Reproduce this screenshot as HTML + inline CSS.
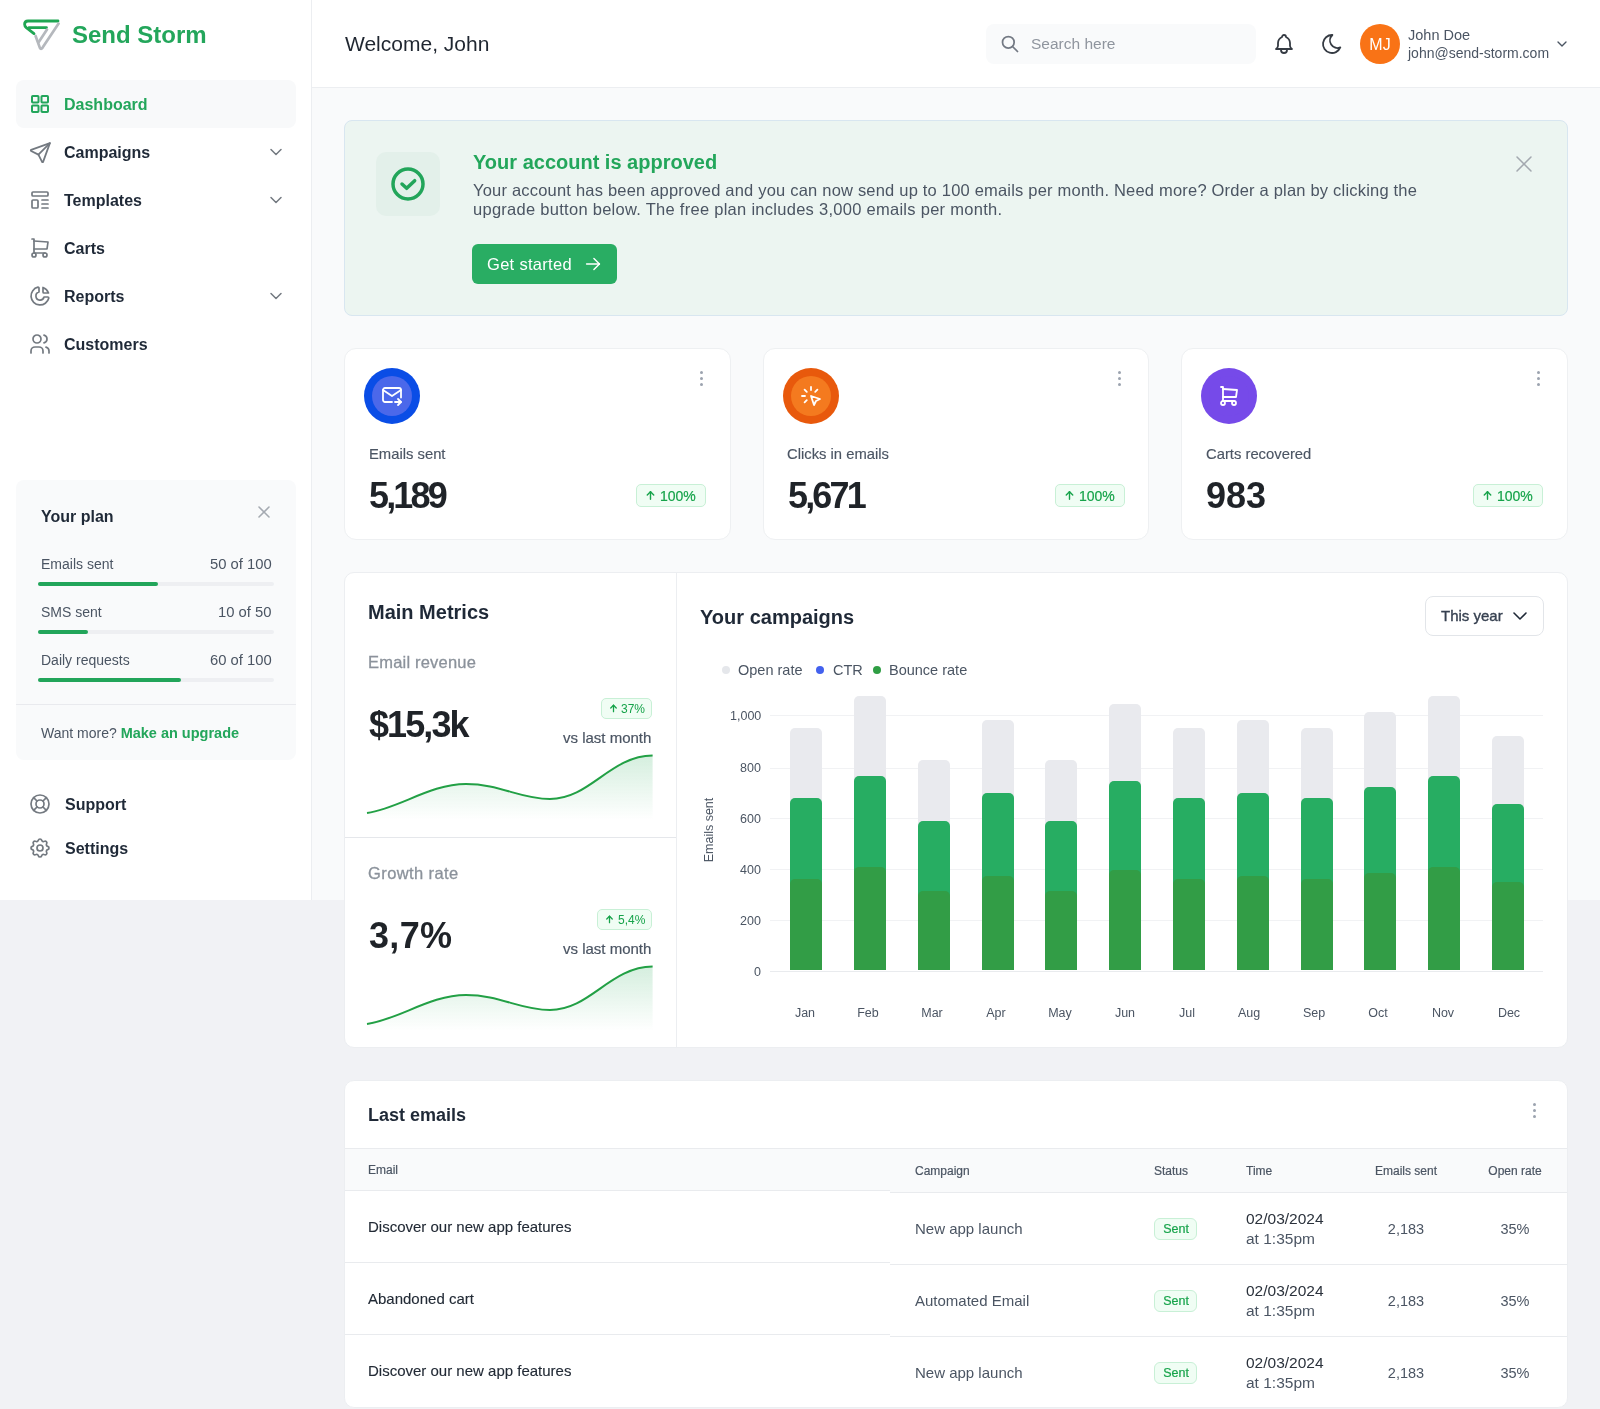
<!DOCTYPE html>
<html><head><meta charset="utf-8"><title>Send Storm Dashboard</title>
<style>
html,body{margin:0;padding:0;}
body{width:1600px;height:1409px;position:relative;overflow:hidden;background:#f1f2f5;font-family:"Liberation Sans",sans-serif;}
.a{position:absolute;}
.t{position:absolute;white-space:nowrap;will-change:transform;}
</style></head><body>
<div class="a" style="left:0px;top:0px;width:311px;height:900px;background:#ffffff;"></div>
<div class="a" style="left:311px;top:0px;width:1px;height:900px;background:#eceef1;"></div>
<div class="a" style="left:312px;top:0px;width:1288px;height:87px;background:#ffffff;"></div>
<div class="a" style="left:312px;top:87px;width:1288px;height:1px;background:#eceef1;"></div>
<div class="a" style="left:312px;top:88px;width:1288px;height:812px;background:#f9fafb;"></div>
<svg class="a" style="left:0px;top:0px;" width="70" height="60" viewBox="0 0 70 60" fill="none" stroke="none" stroke-width="0" stroke-linecap="round" stroke-linejoin="round"><path d="M58 21 L28 21 Q24.6 21 24.6 24.3 Q24.6 26.2 26.3 27.6 L34 33.6" stroke="#1fa652" stroke-width="2.8"/><path d="M29 27.6 L46.5 27.6" stroke="#1fa652" stroke-width="2.6"/><path d="M35.6 36 L39.8 47.6 Q40.9 50 42.6 47.6 L58.6 23.6" stroke="#b5b8bd" stroke-width="2.7"/><path d="M47 29.6 L38.6 42.2" stroke="#b5b8bd" stroke-width="2.7"/></svg>
<div class="t" style="top:23px;font-size:24px;line-height:24px;color:#23a65b;font-weight:700;left:72.00px;">Send Storm</div>
<div class="a" style="left:16px;top:80px;width:280px;height:48px;background:#f8f9fa;border-radius:8px;"></div>
<svg class="a" style="left:31px;top:95px;" width="18" height="18" viewBox="0 0 18 18" fill="none" stroke="#23a65b" stroke-width="2" stroke-linecap="round" stroke-linejoin="round"><rect x="1" y="1" width="6.5" height="6.5" rx="0.8"/><rect x="10.5" y="1" width="6.5" height="6.5" rx="0.8"/><rect x="1" y="10.5" width="6.5" height="6.5" rx="0.8"/><rect x="10.5" y="10.5" width="6.5" height="6.5" rx="0.8"/></svg>
<div class="t" style="top:97px;font-size:16px;line-height:16px;color:#23a65b;font-weight:700;left:64.00px;">Dashboard</div>
<svg class="a" style="left:27.5px;top:139.5px;" width="25" height="25" viewBox="0 0 24 24" fill="none" stroke="#737980" stroke-width="1.7" stroke-linecap="round" stroke-linejoin="round"><path d="M10 14l11 -11"/><path d="M21 3l-6.5 18a.55 .55 0 0 1 -1 0l-3.5 -7l-7 -3.5a.55 .55 0 0 1 0 -1l18 -6.5"/></svg>
<div class="t" style="top:145px;font-size:16px;line-height:16px;color:#1f2937;font-weight:700;left:64.00px;">Campaigns</div>
<svg class="a" style="left:266px;top:142px;" width="20" height="20" viewBox="0 0 24 24" fill="none" stroke="#737980" stroke-width="1.8" stroke-linecap="round" stroke-linejoin="round"><path d="M6 9l6 6l6 -6"/></svg>
<svg class="a" style="left:28px;top:188px;" width="24" height="24" viewBox="0 0 24 24" fill="none" stroke="#737980" stroke-width="1.7" stroke-linecap="round" stroke-linejoin="round"><rect x="4" y="4" width="16" height="4" rx="1"/><rect x="4" y="12" width="6" height="8" rx="1"/><path d="M14 12l6 0"/><path d="M14 16l6 0"/><path d="M14 20l6 0"/></svg>
<div class="t" style="top:193px;font-size:16px;line-height:16px;color:#1f2937;font-weight:700;left:64.00px;">Templates</div>
<svg class="a" style="left:266px;top:190px;" width="20" height="20" viewBox="0 0 24 24" fill="none" stroke="#737980" stroke-width="1.8" stroke-linecap="round" stroke-linejoin="round"><path d="M6 9l6 6l6 -6"/></svg>
<svg class="a" style="left:28px;top:236px;" width="24" height="24" viewBox="0 0 24 24" fill="none" stroke="#737980" stroke-width="1.7" stroke-linecap="round" stroke-linejoin="round"><path d="M6 19m-2 0a2 2 0 1 0 4 0a2 2 0 1 0 -4 0"/><path d="M17 19m-2 0a2 2 0 1 0 4 0a2 2 0 1 0 -4 0"/><path d="M17 17h-11v-14h-2"/><path d="M6 5l14 1l-1 7h-13"/></svg>
<div class="t" style="top:241px;font-size:16px;line-height:16px;color:#1f2937;font-weight:700;left:64.00px;">Carts</div>
<svg class="a" style="left:28px;top:284px;" width="24" height="24" viewBox="0 0 24 24" fill="none" stroke="#737980" stroke-width="1.7" stroke-linecap="round" stroke-linejoin="round"><path d="M10 3.2a9 9 0 1 0 10.8 10.8a1 1 0 0 0 -1 -1h-3.8a4.1 4.1 0 1 1 -5 -5v-4a.9 .9 0 0 0 -1 -.8"/><path d="M15 3.5a9 9 0 0 1 5.5 5.5h-4.5a1 1 0 0 1 -1 -1v-4.5"/></svg>
<div class="t" style="top:289px;font-size:16px;line-height:16px;color:#1f2937;font-weight:700;left:64.00px;">Reports</div>
<svg class="a" style="left:266px;top:286px;" width="20" height="20" viewBox="0 0 24 24" fill="none" stroke="#737980" stroke-width="1.8" stroke-linecap="round" stroke-linejoin="round"><path d="M6 9l6 6l6 -6"/></svg>
<svg class="a" style="left:28px;top:332px;" width="24" height="24" viewBox="0 0 24 24" fill="none" stroke="#737980" stroke-width="1.7" stroke-linecap="round" stroke-linejoin="round"><path d="M9 7m-4 0a4 4 0 1 0 8 0a4 4 0 1 0 -8 0"/><path d="M3 21v-2a4 4 0 0 1 4 -4h4a4 4 0 0 1 4 4v2"/><path d="M16 3.13a4 4 0 0 1 0 7.75"/><path d="M21 21v-2a4 4 0 0 0 -3 -3.85"/></svg>
<div class="t" style="top:337px;font-size:16px;line-height:16px;color:#1f2937;font-weight:700;left:64.00px;">Customers</div>
<div class="a" style="left:16px;top:480px;width:280px;height:280px;background:#f9fafb;border-radius:8px;"></div>
<div class="t" style="top:509px;font-size:16px;line-height:16px;color:#1f2937;font-weight:700;left:41.00px;">Your plan</div>
<svg class="a" style="left:254px;top:502px;" width="20" height="20" viewBox="0 0 24 24" fill="none" stroke="#a5aab1" stroke-width="1.9" stroke-linecap="round" stroke-linejoin="round"><path d="M18 6l-12 12"/><path d="M6 6l12 12"/></svg>
<div class="t" style="top:557px;font-size:14px;line-height:14px;color:#4b5563;font-weight:400;left:41.00px;">Emails sent</div>
<div class="t" style="top:557px;font-size:14.8px;line-height:14.8px;color:#4b5563;font-weight:400;right:1328.40px;text-align:right;">50 of 100</div>
<div class="a" style="left:38px;top:582px;width:236px;height:4px;background:#eeeff2;border-radius:2px;"></div>
<div class="a" style="left:38px;top:582px;width:120px;height:4px;background:#22a55a;border-radius:2px;"></div>
<div class="t" style="top:605px;font-size:14px;line-height:14px;color:#4b5563;font-weight:400;left:41.00px;">SMS sent</div>
<div class="t" style="top:605px;font-size:14.8px;line-height:14.8px;color:#4b5563;font-weight:400;right:1328.40px;text-align:right;">10 of 50</div>
<div class="a" style="left:38px;top:630px;width:236px;height:4px;background:#eeeff2;border-radius:2px;"></div>
<div class="a" style="left:38px;top:630px;width:50px;height:4px;background:#22a55a;border-radius:2px;"></div>
<div class="t" style="top:653px;font-size:14px;line-height:14px;color:#4b5563;font-weight:400;left:41.00px;">Daily requests</div>
<div class="t" style="top:653px;font-size:14.8px;line-height:14.8px;color:#4b5563;font-weight:400;right:1328.40px;text-align:right;">60 of 100</div>
<div class="a" style="left:38px;top:678px;width:236px;height:4px;background:#eeeff2;border-radius:2px;"></div>
<div class="a" style="left:38px;top:678px;width:143px;height:4px;background:#22a55a;border-radius:2px;"></div>
<div class="a" style="left:16px;top:704px;width:280px;height:1px;background:#e9eaee;"></div>
<div class="t" style="top:726px;font-size:14px;line-height:14px;color:#4b5563;font-weight:400;left:41.00px;">Want more? <span style="color:#23a65b;font-weight:700;font-size:14.5px">Make an upgrade</span></div>
<svg class="a" style="left:28px;top:792px;" width="24" height="24" viewBox="0 0 24 24" fill="none" stroke="#737980" stroke-width="1.7" stroke-linecap="round" stroke-linejoin="round"><path d="M12 12m-4 0a4 4 0 1 0 8 0a4 4 0 1 0 -8 0"/><path d="M12 12m-9 0a9 9 0 1 0 18 0a9 9 0 1 0 -18 0"/><path d="M15 15l3.35 3.35"/><path d="M9 15l-3.35 3.35"/><path d="M5.65 5.65l3.35 3.35"/><path d="M18.35 5.65l-3.35 3.35"/></svg>
<div class="t" style="top:797px;font-size:16px;line-height:16px;color:#1f2937;font-weight:700;left:64.50px;">Support</div>
<svg class="a" style="left:28px;top:836px;" width="24" height="24" viewBox="0 0 24 24" fill="none" stroke="#737980" stroke-width="1.7" stroke-linecap="round" stroke-linejoin="round"><path d="M10.325 4.317c.426 -1.756 2.924 -1.756 3.35 0a1.724 1.724 0 0 0 2.573 1.066c1.543 -.94 3.31 .826 2.37 2.37a1.724 1.724 0 0 0 1.065 2.572c1.756 .426 1.756 2.924 0 3.35a1.724 1.724 0 0 0 -1.066 2.573c.94 1.543 -.826 3.31 -2.37 2.37a1.724 1.724 0 0 0 -2.572 1.065c-.426 1.756 -2.924 1.756 -3.35 0a1.724 1.724 0 0 0 -2.573 -1.066c-1.543 .94 -3.31 -.826 -2.37 -2.37a1.724 1.724 0 0 0 -1.065 -2.572c-1.756 -.426 -1.756 -2.924 0 -3.35a1.724 1.724 0 0 0 1.066 -2.573c-.94 -1.543 .826 -3.31 2.37 -2.37c1 .608 2.296 .07 2.572 -1.065z"/><path d="M9 12a3 3 0 1 0 6 0a3 3 0 0 0 -6 0"/></svg>
<div class="t" style="top:841px;font-size:16px;line-height:16px;color:#1f2937;font-weight:700;left:64.50px;">Settings</div>
<div class="t" style="top:33px;font-size:21px;line-height:21px;color:#1f2630;font-weight:400;left:344.75px;">Welcome, John</div>
<div class="a" style="left:986px;top:24px;width:270px;height:40px;background:#f9fafb;border-radius:8px;"></div>
<svg class="a" style="left:1000px;top:34px;" width="20" height="20" viewBox="0 0 24 24" fill="none" stroke="#737983" stroke-width="2.1" stroke-linecap="round" stroke-linejoin="round"><path d="M10 10m-7 0a7 7 0 1 0 14 0a7 7 0 1 0 -14 0"/><path d="M21 21l-6 -6"/></svg>
<div class="t" style="top:36px;font-size:15.5px;line-height:15.5px;color:#8f959e;font-weight:400;left:1030.60px;">Search here</div>
<svg class="a" style="left:1272px;top:32px;" width="24" height="24" viewBox="0 0 24 24" fill="none" stroke="#353b43" stroke-width="1.8" stroke-linecap="round" stroke-linejoin="round"><path d="M10 5a2 2 0 1 1 4 0a7 7 0 0 1 4 6v3a4 4 0 0 0 2 3h-16a4 4 0 0 0 2 -3v-3a7 7 0 0 1 4 -6"/><path d="M9 17v1a3 3 0 0 0 6 0v-1"/></svg>
<svg class="a" style="left:1320px;top:32px;" width="24" height="24" viewBox="0 0 24 24" fill="none" stroke="#353b43" stroke-width="1.8" stroke-linecap="round" stroke-linejoin="round"><path d="M12 3c.132 0 .263 0 .393 0a7.5 7.5 0 0 0 7.92 12.446a9 9 0 1 1 -8.313 -12.454z"/></svg>
<div class="a" style="left:1360px;top:24px;width:40px;height:40px;background:#f97316;border-radius:50%;"></div>
<div class="t" style="top:37px;font-size:16px;line-height:16px;color:#ffffff;font-weight:400;left:1080.00px;width:600px;text-align:center;">MJ</div>
<div class="t" style="top:28px;font-size:14.5px;line-height:14.5px;color:#4b5563;font-weight:400;left:1408.40px;">John Doe</div>
<div class="t" style="top:46px;font-size:14px;line-height:14px;color:#4b5563;font-weight:400;left:1408.40px;">john@send-storm.com</div>
<svg class="a" style="left:1554px;top:36px;" width="16" height="16" viewBox="0 0 24 24" fill="none" stroke="#4b5563" stroke-width="2" stroke-linecap="round" stroke-linejoin="round"><path d="M6 9l6 6l6 -6"/></svg>
<div class="a" style="left:344px;top:120px;width:1224px;height:196px;background:#ecf5f1;box-sizing:border-box;border:1px solid #d8e6f0;border-radius:8px;"></div>
<div class="a" style="left:376px;top:152px;width:64px;height:64px;background:#e3f0ea;border-radius:10px;"></div>
<svg class="a" style="left:388px;top:164px;" width="40" height="40" viewBox="0 0 24 24" fill="none" stroke="#22a55a" stroke-width="2.1" stroke-linecap="round" stroke-linejoin="round"><path d="M12 12m-9 0a9 9 0 1 0 18 0a9 9 0 1 0 -18 0"/><path d="M8.4 12l2.8 2.6l4.8 -4.6"/></svg>
<div class="t" style="top:152px;font-size:20px;line-height:20px;color:#23a65b;font-weight:700;left:473.00px;">Your account is approved</div>
<div class="t" style="top:182px;font-size:16.5px;line-height:16.5px;color:#4b5563;font-weight:400;letter-spacing:0.2px;left:473.00px;">Your account has been approved and you can now send up to 100 emails per month. Need more? Order a plan by clicking the</div>
<div class="t" style="top:201px;font-size:16.5px;line-height:16.5px;color:#4b5563;font-weight:400;letter-spacing:0.275px;left:473.00px;">upgrade button below. The free plan includes 3,000 emails per month.</div>
<div class="a" style="left:472px;top:244px;width:145px;height:40px;background:#29ad63;border-radius:6px;"></div>
<div class="t" style="top:256px;font-size:16.5px;line-height:16.5px;color:#ffffff;font-weight:400;letter-spacing:0.3px;left:486.50px;">Get started</div>
<svg class="a" style="left:582px;top:253px;" width="22" height="22" viewBox="0 0 24 24" fill="none" stroke="#ffffff" stroke-width="1.6" stroke-linecap="round" stroke-linejoin="round"><path d="M5 12l14 0"/><path d="M13 18l6 -6"/><path d="M13 6l6 6"/></svg>
<svg class="a" style="left:1510px;top:150px;" width="28" height="28" viewBox="0 0 24 24" fill="none" stroke="#a3a8af" stroke-width="1.3" stroke-linecap="round" stroke-linejoin="round"><path d="M18 6l-12 12"/><path d="M6 6l12 12"/></svg>
<div class="a" style="left:344px;top:348px;width:386.67px;height:192px;background:#ffffff;box-sizing:border-box;border:1px solid #eef0f2;border-radius:12px;"></div>
<div class="a" style="left:364px;top:368px;width:56px;height:56px;background:#0a4de6;border-radius:50%;"></div>
<div class="a" style="left:372px;top:376px;width:40px;height:40px;background:#4b68ea;border-radius:50%;"></div>
<svg class="a" style="left:380px;top:384px;" width="24" height="24" viewBox="0 0 24 24" fill="none" stroke="#ffffff" stroke-width="1.8" stroke-linecap="round" stroke-linejoin="round"><path d="M12 18h-7a2 2 0 0 1 -2 -2v-10a2 2 0 0 1 2 -2h14a2 2 0 0 1 2 2v7.5"/><path d="M3 6l9 6l9 -6"/><path d="M15 18h6"/><path d="M18 15l3 3l-3 3"/></svg>
<div class="t" style="top:447px;font-size:14.8px;line-height:14.8px;color:#4b5563;font-weight:400;left:368.75px;-webkit-text-stroke:0.15px #4b5563;">Emails sent</div>
<div class="t" style="top:478px;font-size:36px;line-height:36px;color:#1f2328;font-weight:700;letter-spacing:-2.85px;left:369.00px;">5,189</div>
<div class="a" style="left:636px;top:484px;width:70px;height:23px;background:#f0fdf4;box-sizing:border-box;border:1px solid #c8f0d6;border-radius:5px;"></div>
<svg class="a" style="left:644px;top:489px;" width="13" height="13" viewBox="0 0 24 24" fill="none" stroke="#16a34a" stroke-width="2.6" stroke-linecap="round" stroke-linejoin="round"><path d="M12 5l0 14"/><path d="M18 11l-6 -6"/><path d="M6 11l6 -6"/></svg>
<div class="t" style="top:489px;font-size:14px;line-height:14px;color:#16a34a;font-weight:400;left:660.00px;-webkit-text-stroke:0.2px #16a34a;">100%</div>
<div class="a" style="left:699.5px;top:370.5px;width:3px;height:3px;background:#9ca3af;border-radius:50%;"></div>
<div class="a" style="left:699.5px;top:376.5px;width:3px;height:3px;background:#9ca3af;border-radius:50%;"></div>
<div class="a" style="left:699.5px;top:382.5px;width:3px;height:3px;background:#9ca3af;border-radius:50%;"></div>
<div class="a" style="left:762.67px;top:348px;width:386.67px;height:192px;background:#ffffff;box-sizing:border-box;border:1px solid #eef0f2;border-radius:12px;"></div>
<div class="a" style="left:782.67px;top:368px;width:56px;height:56px;background:#e8590c;border-radius:50%;"></div>
<div class="a" style="left:790.67px;top:376px;width:40px;height:40px;background:#f47a1f;border-radius:50%;"></div>
<svg class="a" style="left:798.67px;top:384px;" width="24" height="24" viewBox="0 0 24 24" fill="none" stroke="#ffffff" stroke-width="1.8" stroke-linecap="round" stroke-linejoin="round"><path d="M3 12l3 0"/><path d="M12 3l0 3"/><path d="M7.8 7.8l-2.2 -2.2"/><path d="M16.2 7.8l2.2 -2.2"/><path d="M7.8 16.2l-2.2 2.2"/><path d="M12 12l9 3l-4 2l-2 4l-3 -9"/></svg>
<div class="t" style="top:447px;font-size:14.8px;line-height:14.8px;color:#4b5563;font-weight:400;left:787.42px;-webkit-text-stroke:0.15px #4b5563;">Clicks in emails</div>
<div class="t" style="top:478px;font-size:36px;line-height:36px;color:#1f2328;font-weight:700;letter-spacing:-2.85px;left:787.67px;">5,671</div>
<div class="a" style="left:1054.67px;top:484px;width:70px;height:23px;background:#f0fdf4;box-sizing:border-box;border:1px solid #c8f0d6;border-radius:5px;"></div>
<svg class="a" style="left:1062.67px;top:489px;" width="13" height="13" viewBox="0 0 24 24" fill="none" stroke="#16a34a" stroke-width="2.6" stroke-linecap="round" stroke-linejoin="round"><path d="M12 5l0 14"/><path d="M18 11l-6 -6"/><path d="M6 11l6 -6"/></svg>
<div class="t" style="top:489px;font-size:14px;line-height:14px;color:#16a34a;font-weight:400;left:1078.67px;-webkit-text-stroke:0.2px #16a34a;">100%</div>
<div class="a" style="left:1118.17px;top:370.5px;width:3px;height:3px;background:#9ca3af;border-radius:50%;"></div>
<div class="a" style="left:1118.17px;top:376.5px;width:3px;height:3px;background:#9ca3af;border-radius:50%;"></div>
<div class="a" style="left:1118.17px;top:382.5px;width:3px;height:3px;background:#9ca3af;border-radius:50%;"></div>
<div class="a" style="left:1181.33px;top:348px;width:386.67px;height:192px;background:#ffffff;box-sizing:border-box;border:1px solid #eef0f2;border-radius:12px;"></div>
<div class="a" style="left:1201.33px;top:368px;width:56px;height:56px;background:#764ae9;border-radius:50%;"></div>
<div class="a" style="left:1209.33px;top:376px;width:40px;height:40px;background:#764ae9;border-radius:50%;"></div>
<svg class="a" style="left:1217.33px;top:384px;" width="24" height="24" viewBox="0 0 24 24" fill="none" stroke="#ffffff" stroke-width="1.8" stroke-linecap="round" stroke-linejoin="round"><path d="M6 19m-2 0a2 2 0 1 0 4 0a2 2 0 1 0 -4 0"/><path d="M17 19m-2 0a2 2 0 1 0 4 0a2 2 0 1 0 -4 0"/><path d="M17 17h-11v-14h-2"/><path d="M6 5l14 1l-1 7h-13"/></svg>
<div class="t" style="top:447px;font-size:14.8px;line-height:14.8px;color:#4b5563;font-weight:400;left:1206.08px;-webkit-text-stroke:0.15px #4b5563;">Carts recovered</div>
<div class="t" style="top:478px;font-size:36px;line-height:36px;color:#1f2328;font-weight:700;letter-spacing:0px;left:1206.33px;">983</div>
<div class="a" style="left:1473.33px;top:484px;width:70px;height:23px;background:#f0fdf4;box-sizing:border-box;border:1px solid #c8f0d6;border-radius:5px;"></div>
<svg class="a" style="left:1481.33px;top:489px;" width="13" height="13" viewBox="0 0 24 24" fill="none" stroke="#16a34a" stroke-width="2.6" stroke-linecap="round" stroke-linejoin="round"><path d="M12 5l0 14"/><path d="M18 11l-6 -6"/><path d="M6 11l6 -6"/></svg>
<div class="t" style="top:489px;font-size:14px;line-height:14px;color:#16a34a;font-weight:400;left:1497.33px;-webkit-text-stroke:0.2px #16a34a;">100%</div>
<div class="a" style="left:1536.83px;top:370.5px;width:3px;height:3px;background:#9ca3af;border-radius:50%;"></div>
<div class="a" style="left:1536.83px;top:376.5px;width:3px;height:3px;background:#9ca3af;border-radius:50%;"></div>
<div class="a" style="left:1536.83px;top:382.5px;width:3px;height:3px;background:#9ca3af;border-radius:50%;"></div>
<div class="a" style="left:344px;top:572px;width:1224px;height:476px;background:#ffffff;box-sizing:border-box;border:1px solid #eceef1;border-radius:10px;"></div>
<div class="a" style="left:676px;top:573px;width:1px;height:474px;background:#eceef1;"></div>
<div class="a" style="left:345px;top:837px;width:331px;height:1px;background:#e5e7eb;"></div>
<div class="t" style="top:602px;font-size:20px;line-height:20px;color:#1f2937;font-weight:700;left:368.40px;">Main Metrics</div>
<div class="t" style="top:654px;font-size:16.5px;line-height:16.5px;color:#8b929b;font-weight:400;letter-spacing:0.2px;left:368.40px;-webkit-text-stroke:0.3px #8b929b;">Email revenue</div>
<div class="t" style="top:707px;font-size:36px;line-height:36px;color:#1f2328;font-weight:700;letter-spacing:-1.9px;left:369.00px;">$15,3k</div>
<div class="a" style="left:601px;top:698px;width:51px;height:21px;background:#f0fdf4;box-sizing:border-box;border:1px solid #c8f0d6;border-radius:5px;"></div>
<svg class="a" style="left:608px;top:703px;" width="11" height="11" viewBox="0 0 24 24" fill="none" stroke="#16a34a" stroke-width="2.8" stroke-linecap="round" stroke-linejoin="round"><path d="M12 5l0 14"/><path d="M18 11l-6 -6"/><path d="M6 11l6 -6"/></svg>
<div class="t" style="top:703px;font-size:12px;line-height:12px;color:#16a34a;font-weight:400;right:954.50px;text-align:right;">37%</div>
<div class="t" style="top:730px;font-size:15px;line-height:15px;color:#4b5563;font-weight:400;right:948.60px;text-align:right;-webkit-text-stroke:0.2px #4b5563;">vs last month</div>
<svg class="a" style="left:0;top:0" width="1600" height="1409" viewBox="0 0 1600 1409"><defs><linearGradient id="g0" x1="0" y1="0" x2="0" y2="1"><stop offset="0" stop-color="#16a34a" stop-opacity="0.18"/><stop offset="1" stop-color="#16a34a" stop-opacity="0"/></linearGradient></defs><path d="M367 813 C 400 808, 430 784, 466 784 C 500 784, 520 799, 550 799 C 590 799, 610 756, 652.6 755.6 L 652.6 820 L 367 820 Z" fill="url(#g0)" stroke="none"/><path d="M367 813 C 400 808, 430 784, 466 784 C 500 784, 520 799, 550 799 C 590 799, 610 756, 652.6 755.6" fill="none" stroke="#22a045" stroke-width="2"/></svg>
<div class="t" style="top:865px;font-size:16.5px;line-height:16.5px;color:#8b929b;font-weight:400;letter-spacing:0.4px;left:368.40px;-webkit-text-stroke:0.3px #8b929b;">Growth rate</div>
<div class="t" style="top:918px;font-size:36px;line-height:36px;color:#1f2328;font-weight:700;letter-spacing:0.33px;left:369.00px;">3,7%</div>
<div class="a" style="left:597px;top:909px;width:55px;height:21px;background:#f0fdf4;box-sizing:border-box;border:1px solid #c8f0d6;border-radius:5px;"></div>
<svg class="a" style="left:604px;top:914px;" width="11" height="11" viewBox="0 0 24 24" fill="none" stroke="#16a34a" stroke-width="2.8" stroke-linecap="round" stroke-linejoin="round"><path d="M12 5l0 14"/><path d="M18 11l-6 -6"/><path d="M6 11l6 -6"/></svg>
<div class="t" style="top:914px;font-size:12px;line-height:12px;color:#16a34a;font-weight:400;right:954.50px;text-align:right;">5,4%</div>
<div class="t" style="top:941px;font-size:15px;line-height:15px;color:#4b5563;font-weight:400;right:948.60px;text-align:right;-webkit-text-stroke:0.2px #4b5563;">vs last month</div>
<svg class="a" style="left:0;top:0" width="1600" height="1409" viewBox="0 0 1600 1409"><defs><linearGradient id="g211" x1="0" y1="0" x2="0" y2="1"><stop offset="0" stop-color="#16a34a" stop-opacity="0.18"/><stop offset="1" stop-color="#16a34a" stop-opacity="0"/></linearGradient></defs><path d="M367 1024 C 400 1019, 430 995, 466 995 C 500 995, 520 1010, 550 1010 C 590 1010, 610 967, 652.6 966.6 L 652.6 1031 L 367 1031 Z" fill="url(#g211)" stroke="none"/><path d="M367 1024 C 400 1019, 430 995, 466 995 C 500 995, 520 1010, 550 1010 C 590 1010, 610 967, 652.6 966.6" fill="none" stroke="#22a045" stroke-width="2"/></svg>
<div class="t" style="top:607px;font-size:20px;line-height:20px;color:#1f2937;font-weight:700;left:700.30px;">Your campaigns</div>
<div class="a" style="left:1425px;top:596px;width:119px;height:40px;background:#ffffff;box-sizing:border-box;border:1px solid #e2e5e9;border-radius:8px;"></div>
<div class="t" style="top:608px;font-size:15px;line-height:15px;color:#374151;font-weight:400;left:1441.30px;-webkit-text-stroke:0.35px #374151;">This year</div>
<svg class="a" style="left:1508px;top:604px;" width="24" height="24" viewBox="0 0 24 24" fill="none" stroke="#1f2937" stroke-width="1.6" stroke-linecap="round" stroke-linejoin="round"><path d="M6 9l6 6l6 -6"/></svg>
<div class="a" style="left:722px;top:666px;width:8px;height:8px;background:#e5e7eb;border-radius:50%;"></div>
<div class="t" style="top:663px;font-size:14.5px;line-height:14.5px;color:#4b5563;font-weight:400;left:738.40px;">Open rate</div>
<div class="a" style="left:816px;top:666px;width:8px;height:8px;background:#4361ee;border-radius:50%;"></div>
<div class="t" style="top:663px;font-size:14.5px;line-height:14.5px;color:#4b5563;font-weight:400;left:832.50px;">CTR</div>
<div class="a" style="left:873px;top:666px;width:8px;height:8px;background:#2f9e44;border-radius:50%;"></div>
<div class="t" style="top:663px;font-size:14.5px;line-height:14.5px;color:#4b5563;font-weight:400;left:889.30px;">Bounce rate</div>
<div class="a" style="left:770px;top:714.5px;width:773px;height:1px;background:#f1f2f4;"></div>
<div class="t" style="top:710px;font-size:12.5px;line-height:12.5px;color:#4b5563;font-weight:400;right:838.70px;text-align:right;">1,000</div>
<div class="a" style="left:770px;top:767.5px;width:773px;height:1px;background:#f1f2f4;"></div>
<div class="t" style="top:762px;font-size:12.5px;line-height:12.5px;color:#4b5563;font-weight:400;right:838.70px;text-align:right;">800</div>
<div class="a" style="left:770px;top:818.0px;width:773px;height:1px;background:#f1f2f4;"></div>
<div class="t" style="top:813px;font-size:12.5px;line-height:12.5px;color:#4b5563;font-weight:400;right:838.70px;text-align:right;">600</div>
<div class="a" style="left:770px;top:869.0px;width:773px;height:1px;background:#f1f2f4;"></div>
<div class="t" style="top:864px;font-size:12.5px;line-height:12.5px;color:#4b5563;font-weight:400;right:838.70px;text-align:right;">400</div>
<div class="a" style="left:770px;top:920.0px;width:773px;height:1px;background:#f1f2f4;"></div>
<div class="t" style="top:915px;font-size:12.5px;line-height:12.5px;color:#4b5563;font-weight:400;right:838.70px;text-align:right;">200</div>
<div class="a" style="left:770px;top:970.5px;width:773px;height:1px;background:#e9ebee;"></div>
<div class="t" style="top:966px;font-size:12.5px;line-height:12.5px;color:#4b5563;font-weight:400;right:838.70px;text-align:right;">0</div>
<div class="t" style="left:658.8px;top:822px;width:100px;text-align:center;font-size:12.5px;line-height:16px;color:#4b5563;transform:rotate(-90deg);">Emails sent</div>
<div class="a" style="left:790.2px;top:728px;width:32px;height:242px;background:#e9eaee;border-radius:5px 5px 0 0;"></div>
<div class="a" style="left:790.2px;top:798.3px;width:32px;height:171.70000000000005px;background:#27ad62;border-radius:5px 5px 0 0;"></div>
<div class="a" style="left:790.2px;top:878.8px;width:32px;height:91.20000000000005px;background:#329d46;border-radius:5px 5px 0 0;"></div>
<div class="t" style="top:1007px;font-size:12.5px;line-height:12.5px;color:#4b5563;font-weight:400;left:504.60px;width:600px;text-align:center;">Jan</div>
<div class="a" style="left:854.0px;top:696.2px;width:32px;height:273.79999999999995px;background:#e9eaee;border-radius:5px 5px 0 0;"></div>
<div class="a" style="left:854.0px;top:776px;width:32px;height:194px;background:#27ad62;border-radius:5px 5px 0 0;"></div>
<div class="a" style="left:854.0px;top:866.9px;width:32px;height:103.10000000000002px;background:#329d46;border-radius:5px 5px 0 0;"></div>
<div class="t" style="top:1007px;font-size:12.5px;line-height:12.5px;color:#4b5563;font-weight:400;left:567.50px;width:600px;text-align:center;">Feb</div>
<div class="a" style="left:917.8px;top:760px;width:32px;height:210px;background:#e9eaee;border-radius:5px 5px 0 0;"></div>
<div class="a" style="left:917.8px;top:821.1px;width:32px;height:148.89999999999998px;background:#27ad62;border-radius:5px 5px 0 0;"></div>
<div class="a" style="left:917.8px;top:890.7px;width:32px;height:79.29999999999995px;background:#329d46;border-radius:5px 5px 0 0;"></div>
<div class="t" style="top:1007px;font-size:12.5px;line-height:12.5px;color:#4b5563;font-weight:400;left:631.50px;width:600px;text-align:center;">Mar</div>
<div class="a" style="left:981.6px;top:719.9px;width:32px;height:250.10000000000002px;background:#e9eaee;border-radius:5px 5px 0 0;"></div>
<div class="a" style="left:981.6px;top:792.8px;width:32px;height:177.20000000000005px;background:#27ad62;border-radius:5px 5px 0 0;"></div>
<div class="a" style="left:981.6px;top:876px;width:32px;height:94px;background:#329d46;border-radius:5px 5px 0 0;"></div>
<div class="t" style="top:1007px;font-size:12.5px;line-height:12.5px;color:#4b5563;font-weight:400;left:695.50px;width:600px;text-align:center;">Apr</div>
<div class="a" style="left:1045.4px;top:760px;width:32px;height:210px;background:#e9eaee;border-radius:5px 5px 0 0;"></div>
<div class="a" style="left:1045.4px;top:821.1px;width:32px;height:148.89999999999998px;background:#27ad62;border-radius:5px 5px 0 0;"></div>
<div class="a" style="left:1045.4px;top:890.7px;width:32px;height:79.29999999999995px;background:#329d46;border-radius:5px 5px 0 0;"></div>
<div class="t" style="top:1007px;font-size:12.5px;line-height:12.5px;color:#4b5563;font-weight:400;left:759.50px;width:600px;text-align:center;">May</div>
<div class="a" style="left:1109.2px;top:704px;width:32px;height:266px;background:#e9eaee;border-radius:5px 5px 0 0;"></div>
<div class="a" style="left:1109.2px;top:781.4px;width:32px;height:188.60000000000002px;background:#27ad62;border-radius:5px 5px 0 0;"></div>
<div class="a" style="left:1109.2px;top:870px;width:32px;height:100px;background:#329d46;border-radius:5px 5px 0 0;"></div>
<div class="t" style="top:1007px;font-size:12.5px;line-height:12.5px;color:#4b5563;font-weight:400;left:824.50px;width:600px;text-align:center;">Jun</div>
<div class="a" style="left:1173.0px;top:728px;width:32px;height:242px;background:#e9eaee;border-radius:5px 5px 0 0;"></div>
<div class="a" style="left:1173.0px;top:798.3px;width:32px;height:171.70000000000005px;background:#27ad62;border-radius:5px 5px 0 0;"></div>
<div class="a" style="left:1173.0px;top:878.8px;width:32px;height:91.20000000000005px;background:#329d46;border-radius:5px 5px 0 0;"></div>
<div class="t" style="top:1007px;font-size:12.5px;line-height:12.5px;color:#4b5563;font-weight:400;left:886.70px;width:600px;text-align:center;">Jul</div>
<div class="a" style="left:1236.8px;top:719.9px;width:32px;height:250.10000000000002px;background:#e9eaee;border-radius:5px 5px 0 0;"></div>
<div class="a" style="left:1236.8px;top:792.8px;width:32px;height:177.20000000000005px;background:#27ad62;border-radius:5px 5px 0 0;"></div>
<div class="a" style="left:1236.8px;top:876px;width:32px;height:94px;background:#329d46;border-radius:5px 5px 0 0;"></div>
<div class="t" style="top:1007px;font-size:12.5px;line-height:12.5px;color:#4b5563;font-weight:400;left:949.40px;width:600px;text-align:center;">Aug</div>
<div class="a" style="left:1300.6px;top:728px;width:32px;height:242px;background:#e9eaee;border-radius:5px 5px 0 0;"></div>
<div class="a" style="left:1300.6px;top:798.3px;width:32px;height:171.70000000000005px;background:#27ad62;border-radius:5px 5px 0 0;"></div>
<div class="a" style="left:1300.6px;top:878.8px;width:32px;height:91.20000000000005px;background:#329d46;border-radius:5px 5px 0 0;"></div>
<div class="t" style="top:1007px;font-size:12.5px;line-height:12.5px;color:#4b5563;font-weight:400;left:1014.30px;width:600px;text-align:center;">Sep</div>
<div class="a" style="left:1364.4px;top:711.8px;width:32px;height:258.20000000000005px;background:#e9eaee;border-radius:5px 5px 0 0;"></div>
<div class="a" style="left:1364.4px;top:787.1px;width:32px;height:182.89999999999998px;background:#27ad62;border-radius:5px 5px 0 0;"></div>
<div class="a" style="left:1364.4px;top:872.9px;width:32px;height:97.10000000000002px;background:#329d46;border-radius:5px 5px 0 0;"></div>
<div class="t" style="top:1007px;font-size:12.5px;line-height:12.5px;color:#4b5563;font-weight:400;left:1078.20px;width:600px;text-align:center;">Oct</div>
<div class="a" style="left:1428.2px;top:696.2px;width:32px;height:273.79999999999995px;background:#e9eaee;border-radius:5px 5px 0 0;"></div>
<div class="a" style="left:1428.2px;top:776px;width:32px;height:194px;background:#27ad62;border-radius:5px 5px 0 0;"></div>
<div class="a" style="left:1428.2px;top:866.9px;width:32px;height:103.10000000000002px;background:#329d46;border-radius:5px 5px 0 0;"></div>
<div class="t" style="top:1007px;font-size:12.5px;line-height:12.5px;color:#4b5563;font-weight:400;left:1142.90px;width:600px;text-align:center;">Nov</div>
<div class="a" style="left:1492.0px;top:736px;width:32px;height:234px;background:#e9eaee;border-radius:5px 5px 0 0;"></div>
<div class="a" style="left:1492.0px;top:804px;width:32px;height:166px;background:#27ad62;border-radius:5px 5px 0 0;"></div>
<div class="a" style="left:1492.0px;top:881.9px;width:32px;height:88.10000000000002px;background:#329d46;border-radius:5px 5px 0 0;"></div>
<div class="t" style="top:1007px;font-size:12.5px;line-height:12.5px;color:#4b5563;font-weight:400;left:1208.60px;width:600px;text-align:center;">Dec</div>
<div class="a" style="left:344px;top:1080px;width:1224px;height:328px;background:#ffffff;box-sizing:border-box;border:1px solid #eceef1;border-radius:10px;"></div>
<div class="t" style="top:1106px;font-size:18px;line-height:18px;color:#1f2937;font-weight:700;left:368.40px;">Last emails</div>
<div class="a" style="left:1532.5px;top:1102.5px;width:3px;height:3px;background:#9ca3af;border-radius:50%;"></div>
<div class="a" style="left:1532.5px;top:1108.5px;width:3px;height:3px;background:#9ca3af;border-radius:50%;"></div>
<div class="a" style="left:1532.5px;top:1114.5px;width:3px;height:3px;background:#9ca3af;border-radius:50%;"></div>
<div class="a" style="left:345px;top:1148px;width:1222px;height:1px;background:#e9ebee;"></div>
<div class="a" style="left:345px;top:1149px;width:545px;height:41px;background:#f9fafb;"></div>
<div class="a" style="left:890px;top:1149px;width:677px;height:43px;background:#f9fafb;"></div>
<div class="a" style="left:345px;top:1190px;width:545px;height:1px;background:#e9ebee;"></div>
<div class="a" style="left:890px;top:1192px;width:677px;height:1px;background:#e9ebee;"></div>
<div class="t" style="top:1164px;font-size:12px;line-height:12px;color:#4b5563;font-weight:400;left:368.40px;-webkit-text-stroke:0.2px #4b5563;">Email</div>
<div class="t" style="top:1165px;font-size:12px;line-height:12px;color:#4b5563;font-weight:400;left:914.50px;-webkit-text-stroke:0.2px #4b5563;">Campaign</div>
<div class="t" style="top:1165px;font-size:12px;line-height:12px;color:#4b5563;font-weight:400;left:1154.40px;-webkit-text-stroke:0.2px #4b5563;">Status</div>
<div class="t" style="top:1165px;font-size:12px;line-height:12px;color:#4b5563;font-weight:400;left:1246.00px;-webkit-text-stroke:0.2px #4b5563;">Time</div>
<div class="t" style="top:1165px;font-size:12px;line-height:12px;color:#4b5563;font-weight:400;left:1105.70px;width:600px;text-align:center;-webkit-text-stroke:0.2px #4b5563;">Emails sent</div>
<div class="t" style="top:1165px;font-size:12px;line-height:12px;color:#4b5563;font-weight:400;left:1215.40px;width:600px;text-align:center;-webkit-text-stroke:0.2px #4b5563;">Open rate</div>
<div class="t" style="top:1219px;font-size:15px;line-height:15px;color:#222a35;font-weight:400;left:368.40px;-webkit-text-stroke:0.12px #222a35;">Discover our new app features</div>
<div class="a" style="left:345px;top:1262px;width:545px;height:1px;background:#e9ebee;"></div>
<div class="a" style="left:890px;top:1264px;width:677px;height:1px;background:#e9ebee;"></div>
<div class="t" style="top:1221px;font-size:15px;line-height:15px;color:#4b5563;font-weight:400;left:914.50px;">New app launch</div>
<div class="a" style="left:1154px;top:1218px;width:43px;height:22px;background:#f0fdf4;box-sizing:border-box;border:1px solid #c8f0d6;border-radius:6px;"></div>
<div class="t" style="top:1223px;font-size:12.5px;line-height:12.5px;color:#16a34a;font-weight:400;left:875.50px;width:600px;text-align:center;-webkit-text-stroke:0.2px #16a34a;">Sent</div>
<div class="t" style="top:1211px;font-size:15.5px;line-height:15.5px;color:#2b323c;font-weight:400;left:1246.00px;">02/03/2024</div>
<div class="t" style="top:1231px;font-size:15.5px;line-height:15.5px;color:#4b5563;font-weight:400;left:1246.00px;">at 1:35pm</div>
<div class="t" style="top:1222px;font-size:14.5px;line-height:14.5px;color:#4b5563;font-weight:400;left:1105.70px;width:600px;text-align:center;">2,183</div>
<div class="t" style="top:1222px;font-size:14.5px;line-height:14.5px;color:#4b5563;font-weight:400;left:1215.40px;width:600px;text-align:center;">35%</div>
<div class="t" style="top:1291px;font-size:15px;line-height:15px;color:#222a35;font-weight:400;left:368.40px;-webkit-text-stroke:0.12px #222a35;">Abandoned cart</div>
<div class="a" style="left:345px;top:1334px;width:545px;height:1px;background:#e9ebee;"></div>
<div class="a" style="left:890px;top:1336px;width:677px;height:1px;background:#e9ebee;"></div>
<div class="t" style="top:1293px;font-size:15px;line-height:15px;color:#4b5563;font-weight:400;left:914.50px;">Automated Email</div>
<div class="a" style="left:1154px;top:1290px;width:43px;height:22px;background:#f0fdf4;box-sizing:border-box;border:1px solid #c8f0d6;border-radius:6px;"></div>
<div class="t" style="top:1295px;font-size:12.5px;line-height:12.5px;color:#16a34a;font-weight:400;left:875.50px;width:600px;text-align:center;-webkit-text-stroke:0.2px #16a34a;">Sent</div>
<div class="t" style="top:1283px;font-size:15.5px;line-height:15.5px;color:#2b323c;font-weight:400;left:1246.00px;">02/03/2024</div>
<div class="t" style="top:1303px;font-size:15.5px;line-height:15.5px;color:#4b5563;font-weight:400;left:1246.00px;">at 1:35pm</div>
<div class="t" style="top:1294px;font-size:14.5px;line-height:14.5px;color:#4b5563;font-weight:400;left:1105.70px;width:600px;text-align:center;">2,183</div>
<div class="t" style="top:1294px;font-size:14.5px;line-height:14.5px;color:#4b5563;font-weight:400;left:1215.40px;width:600px;text-align:center;">35%</div>
<div class="t" style="top:1363px;font-size:15px;line-height:15px;color:#222a35;font-weight:400;left:368.40px;-webkit-text-stroke:0.12px #222a35;">Discover our new app features</div>
<div class="t" style="top:1365px;font-size:15px;line-height:15px;color:#4b5563;font-weight:400;left:914.50px;">New app launch</div>
<div class="a" style="left:1154px;top:1362px;width:43px;height:22px;background:#f0fdf4;box-sizing:border-box;border:1px solid #c8f0d6;border-radius:6px;"></div>
<div class="t" style="top:1367px;font-size:12.5px;line-height:12.5px;color:#16a34a;font-weight:400;left:875.50px;width:600px;text-align:center;-webkit-text-stroke:0.2px #16a34a;">Sent</div>
<div class="t" style="top:1355px;font-size:15.5px;line-height:15.5px;color:#2b323c;font-weight:400;left:1246.00px;">02/03/2024</div>
<div class="t" style="top:1375px;font-size:15.5px;line-height:15.5px;color:#4b5563;font-weight:400;left:1246.00px;">at 1:35pm</div>
<div class="t" style="top:1366px;font-size:14.5px;line-height:14.5px;color:#4b5563;font-weight:400;left:1105.70px;width:600px;text-align:center;">2,183</div>
<div class="t" style="top:1366px;font-size:14.5px;line-height:14.5px;color:#4b5563;font-weight:400;left:1215.40px;width:600px;text-align:center;">35%</div>
</body></html>
